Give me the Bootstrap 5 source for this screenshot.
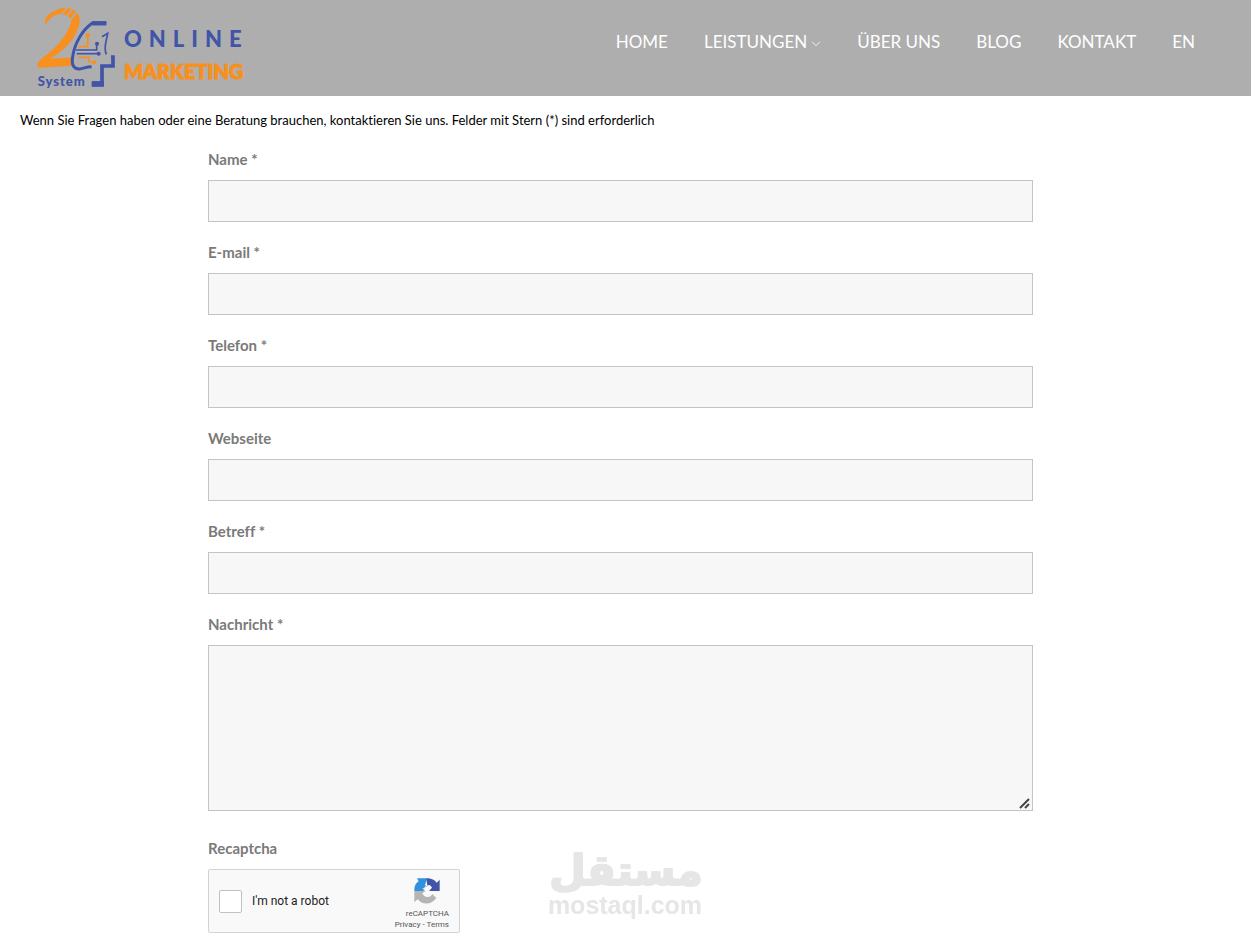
<!DOCTYPE html>
<html lang="de">
<head>
<meta charset="utf-8">
<meta name="viewport" content="width=device-width, initial-scale=1">
<title>Kontakt – 24 System Online Marketing</title>
<link href="https://cdn.jsdelivr.net/npm/bootstrap@5.3.0/dist/css/bootstrap.min.css" rel="stylesheet">
<style>
  body { font-family: Lato, sans-serif; font-variant-ligatures: none; color: #000; background: #fff; }
  .site-header { background: #aeaeae; min-height: 96px; padding: 0 38px 0 30px; }
  .site-header .nav-link { color: #fff; font-size: 17px; line-height: 26px; padding: 0 18px; }
  .site-nav { padding-top: 29px; }
  .page-body { padding: 14px 30px 5px 20px; }
  .intro { font-size: 13px; line-height: 20px; margin-bottom: 18px; }
  .contact-form { max-width: 825px; }
  .form-label { color: #7a7a7a; font-size: 15px; font-weight: 700; line-height: 22px; margin-bottom: 10px; display: block; }
  .field-group { margin-bottom: 19px; }
  .contact-form .form-control { background: #f7f7f7; border: 1px solid #c4c4c4; border-radius: 0; height: 42px; }
  .contact-form textarea.form-control { height: 166px; }
  .contact-form textarea::-webkit-resizer { background: url("data:image/svg+xml,%3Csvg xmlns='http://www.w3.org/2000/svg' viewBox='0 0 15 15'%3E%3Cpath d='M3 13L12 4M8 13L12 9' stroke='%23444' stroke-width='2'/%3E%3C/svg%3E") no-repeat center / 100% 100%; }
  .message-group { margin-bottom: 26px; }
  .captcha-box { width: 252px; height: 64px; background: #f9f9f9; border: 1px solid #d3d3d3; border-radius: 2px; padding: 0 10px; font-family: Roboto, sans-serif; }
  .captcha-box .form-check-input { width: 23px; height: 23px; margin: 0; border: 1px solid #c1c1c1; border-radius: 2px; background-color: #fff; }
  .captcha-box label { font-size: 12px; color: #222; margin-left: 10px; }
  .captcha-brand { font-size: 8px; line-height: 11px; color: #555; }
  .captcha-brand a { color: #555; text-decoration: none; }
  .watermark { left: 50%; bottom: 16px; transform: translateX(-50%); pointer-events: none; }
</style>
</head>
<body>
<header class="site-header d-flex justify-content-between align-items-start">
  <a href="#" aria-label="24 System Online Marketing">
    <svg class="d-block" width="230" height="96" viewBox="0 0 690 288" fill="none">
      <g fill="#f7901e">
        <path d="M45 76C42 56 53 42 72 34L88 26L110 22L92 42C76 43 60 52 45 76Z"/>
        <path d="M97 43L113 24L125 26L110 47ZM114 49L128 29L139 33L122 55ZM125 58L142 38C155 54 149 82 132 110C115 139 85 160 62 176L127 172L124 197L28 203C20 201 21 188 30 180C63 155 91 130 109 99C118 82 124 70 125 58Z"/>
        <circle cx="173" cy="106" r="7"/><circle cx="193" cy="187" r="6"/>
      </g>
      <path d="M173 108V140H145M145 172H177V186H190" stroke="#f7901e" stroke-width="5"/>
      <path d="M229 69H187C156 91 132 132 127 177C125 197 133 208 149 207C160 205 170 200 185 200" stroke="#4054a8" stroke-width="9"/>
      <path d="M187 70H229" stroke="#4054a8" stroke-width="13"/>
      <path d="M216 110L233 100C230 122 219 143 229 163" stroke="#4054a8" stroke-width="5"/>
      <path d="M200 133V150H138M140 161H205" stroke="#4054a8" stroke-width="5"/>
      <path d="M140 156H196" stroke="#dfe3f3" stroke-width="2" stroke-dasharray="3 3"/>
      <g fill="#4054a8"><circle cx="201" cy="131" r="6"/><circle cx="206" cy="161" r="6"/></g>
      <path d="M243 171H249V198H216V250H190" stroke="#4054a8" stroke-width="11"/>
      <path d="M185 252H222" stroke="#4054a8" stroke-width="17"/>
      <g font-family="Lato, sans-serif" font-weight="900">
        <text x="23" y="258" font-size="39" letter-spacing="3" fill="#4054a8">System</text>
        <text x="282" y="140" font-size="66" letter-spacing="21" fill="#4054a8">ONLINE</text>
        <text x="282" y="236" font-size="60" fill="#f7901e" stroke="#f7901e" stroke-width="3" stroke-linejoin="round">MARKETING</text>
      </g>
    </svg>
  </a>
  <nav class="site-nav nav">
    <a class="nav-link" href="#">HOME</a>
    <a class="nav-link" href="#">LEISTUNGEN<svg class="ms-1" width="10" height="6" viewBox="0 0 11 7" fill="none" stroke="#fff"><path d="M1 1L5.500 5.500L10 1"/></svg></a>
    <a class="nav-link" href="#">ÜBER UNS</a>
    <a class="nav-link" href="#">BLOG</a>
    <a class="nav-link" href="#">KONTAKT</a>
    <a class="nav-link" href="#">EN</a>
  </nav>
</header>
<main class="page-body">
  <p class="intro">Wenn Sie Fragen haben oder eine Beratung brauchen, kontaktieren Sie uns. Felder mit Stern (*) sind erforderlich</p>
  <form class="contact-form mx-auto">
    <div class="field-group"><label class="form-label" for="name">Name *</label><input class="form-control" id="name" type="text" required></div>
    <div class="field-group"><label class="form-label" for="email">E-mail *</label><input class="form-control" id="email" type="email" required></div>
    <div class="field-group"><label class="form-label" for="phone">Telefon *</label><input class="form-control" id="phone" type="tel" required></div>
    <div class="field-group"><label class="form-label" for="website">Webseite</label><input class="form-control" id="website" type="url"></div>
    <div class="field-group"><label class="form-label" for="subject">Betreff *</label><input class="form-control" id="subject" type="text" required></div>
    <div class="message-group"><label class="form-label" for="message">Nachricht *</label><textarea class="form-control" id="message" required></textarea></div>
    <div class="form-label">Recaptcha</div>
    <div class="captcha-box d-flex align-items-center">
      <input class="form-check-input flex-shrink-0" id="robot" type="checkbox">
      <label for="robot">I'm not a robot</label>
      <div class="captcha-brand ms-auto text-end pt-1">
        <svg class="d-block ms-auto me-2 mb-1" width="28" height="27" viewBox="0 0 84 81">
          <path fill="#3291de" d="M12 4H43L36 24L43 30L36 28L34 34L27 34L36 40L28 42H4C4 27 8 19 17 13Z"/>
          <path fill="#4054a8" d="M40 4C56 4 65 9 71 17L80 8V42H48L57 32C53 25 48 22 43 26Z"/>
          <path fill="#b5b5b5" d="M4 42H38L28 49C31 56 36 60 44 60C51 60 55 57 58 51L70 63C54 85 28 84 14 67L4 76Z"/>
        </svg>
        <div>reCAPTCHA</div>
        <div><a href="#">Privacy</a> - <a href="#">Terms</a></div>
      </div>
    </div>
  </form>
</main>
<div class="watermark position-fixed">
  <svg class="d-block" width="160" height="88" viewBox="0 0 160 88" fill="#e6e6e6" text-anchor="middle">
    <text x="80" y="50" font-family="DejaVu Sans, sans-serif" font-weight="700" font-size="42" stroke="#e6e6e6" stroke-width="2" stroke-linejoin="round">مستقل</text>
    <text x="79" y="79" font-family="Liberation Sans, sans-serif" font-weight="700" font-size="25">mostaql.com</text>
  </svg>
</div>
<script src="https://cdn.jsdelivr.net/npm/bootstrap@5.3.0/dist/js/bootstrap.bundle.min.js"></script>
</body>
</html>
